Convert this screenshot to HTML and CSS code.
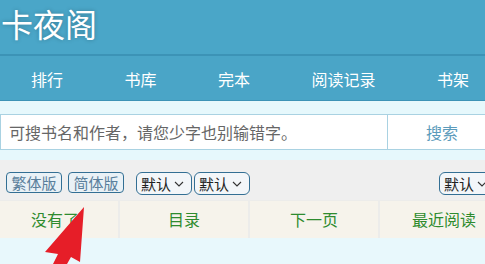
FILE: index.html
```html
<!DOCTYPE html>
<html lang="zh">
<head>
<meta charset="utf-8">
<title>卡夜阁</title>
<link rel="stylesheet" href="styles.css">
</head>
<body>
<div class="page">
  <header class="top">
    <div class="logo">卡夜阁</div>
  </header>
  <nav class="nav">
    <a>排行</a><a>书库</a><a>完本</a><a>阅读记录</a><a>书架</a>
  </nav>
  <section class="search">
    <div class="form">
      <div class="input">可搜书名和作者，请您少字也别输错字。</div>
      <div class="btn">搜索</div>
    </div>
  </section>
  <section class="tools">
    <span class="tbtn">繁体版</span>
    <span class="tbtn">简体版</span>
    <span class="sel first">默认<svg viewBox="0 0 10 6" class="chev"><path d="M1 1 L5 5 L9 1" fill="none" stroke="#333" stroke-width="1.1"/></svg></span>
    <span class="sel">默认<svg viewBox="0 0 10 6" class="chev"><path d="M1 1 L5 5 L9 1" fill="none" stroke="#333" stroke-width="1.1"/></svg></span>
    <span class="sel right">默认<svg viewBox="0 0 10 6" class="chev"><path d="M1 1 L5 5 L9 1" fill="none" stroke="#333" stroke-width="1.1"/></svg></span>
  </section>
  <section class="pager">
    <a class="cell c1">没有了</a>
    <a class="cell">目录</a>
    <a class="cell">下一页</a>
    <a class="cell">最近阅读</a>
  </section>
  <svg class="arrow" viewBox="0 0 485 264" width="485" height="264">
    <polygon points="84,207 80,262 71,257 67,264 53,264 58,254 45,252" fill="#e61e28"/>
  </svg>
</div>
</body>
</html>
```
FILE: styles.css
```css
html, body {
  margin: 0;
  padding: 0;
}
body {
  width: 485px;
  height: 264px;
  overflow: hidden;
  background: #e8f8fc;
  font-family: "Noto Sans CJK SC", "Noto Sans", sans-serif;
}
.page {
  position: relative;
  width: 485px;
  height: 264px;
  overflow: hidden;
}
.top {
  height: 54px;
  background: #4aa6c8;
  border-bottom: 2px solid #3c93b6;
}
.logo {
  color: #fff;
  font-size: 32px;
  line-height: 46px;
  padding-left: 1px;
  text-shadow: 0 0 4px rgba(0, 0, 0, 0.25);
}
.nav {
  height: 44px;
  background: #4aa5c7;
  border-bottom: 1px solid #3c93b6;
  display: flex;
  align-items: center;
  gap: 61.5px;
  padding-left: 31px;
}
.nav a {
  flex: none;
  color: #fff;
  font-size: 16px;
  line-height: 20px;
  padding-top: 2px;
}
.search {
  padding: 13px 0 10px;
  background: #e6f8fc;
}
.form {
  display: flex;
  height: 34px;
  border-top: 1px solid #a9d2e2;
  border-bottom: 1px solid #a9d2e2;
  background: #fff;
}
.input {
  flex: none;
  width: 378px;
  border-left: 1px solid #a9d2e2;
  border-right: 1px solid #a9d2e2;
  padding-left: 8px;
  color: #666;
  font-size: 16px;
  line-height: 34px;
}
.btn {
  flex: none;
  width: 108px;
  text-align: center;
  color: #5b9bbb;
  font-size: 16px;
  line-height: 34px;
}
.tools {
  height: 40px;
  background: #efefef;
  display: flex;
  align-items: flex-start;
  padding: 12px 0 0 6px;
  box-sizing: border-box;
}
.tbtn {
  flex: none;
  box-sizing: border-box;
  height: 21px;
  width: 56px;
  margin-right: 6px;
  border: 1px solid #336f94;
  border-radius: 4px;
  background: #e9f1f6;
  color: #5a7f9c;
  font-size: 15px;
  line-height: 19px;
  text-align: center;
}
.sel {
  flex: none;
  box-sizing: border-box;
  height: 23px;
  width: 56px;
  border: 1px solid #336f94;
  border-radius: 6px;
  background: #f3f6f9;
  color: #222;
  font-size: 15px;
  line-height: 20px;
  padding-left: 4px;
  display: flex;
  align-items: center;
  gap: 3px;
  white-space: nowrap;
}
.sel.first {
  margin-left: 6px;
  margin-right: 2px;
}
.chev {
  flex: none;
  width: 10px;
  height: 6px;
  margin-top: 1px;
}
.sel.right {
  margin-left: auto;
  margin-right: -10px;
}
.pager {
  display: flex;
  gap: 2px;
  padding-top: 1px;
  background: #ececea;
  height: 38px;
  box-sizing: border-box;
}
.cell {
  width: 128px;
  flex: none;
  height: 37px;
  background: #f6f3eb;
  color: #2e8b2e;
  font-size: 16px;
  line-height: 37px;
  text-align: center;
}
.cell.c1 {
  box-sizing: border-box;
  width: 118px;
  padding-right: 8px;
}
.arrow {
  position: absolute;
  left: 0;
  top: 0;
  pointer-events: none;
}
```
